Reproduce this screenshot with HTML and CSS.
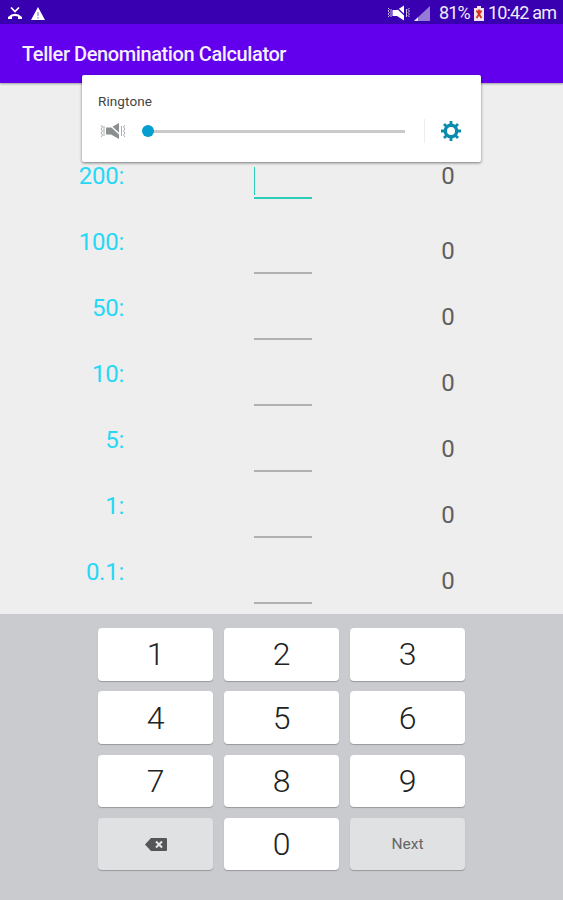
FILE: index.html
```html
<!DOCTYPE html>
<html lang="en">
<head>
    <meta charset="UTF-8">
    <meta name="viewport" content="width=device-width, initial-scale=1.0">
    <title>Teller Denomination Calculator</title>
    <link rel="stylesheet" href="styles.css">
</head>
<body>
    <div class="status-bar">
        <svg class="missed-call" width="14" height="13" viewBox="0 0 14 13">
            <path d="M3 0.500 L7 4.500 L11 0.500" fill="none" stroke="#fff" stroke-width="1.700"/>
            <path d="M0 10 Q7 3.500 14 10 V12 H10 V9.500 Q7 8.500 4 9.500 V12 H0 Z" fill="#fff"/>
        </svg>
        <svg class="warning" width="14" height="13" viewBox="0 0 14 13">
            <path d="M7 0 L14 13 H0 Z" fill="#fff"/>
            <path d="M7 5 V9 M7 10 V11.500" stroke="#9c86d8" stroke-width="1.300"/>
        </svg>
        <div class="status-right">
            <svg class="mute" width="24" height="16" viewBox="0 0 24 16">
                <path d="M5.500 5 H10 L17 0.500 V15.500 L10 11 H5.500 Z" fill="#fff"/>
                <path d="M8 1 L18.500 11" stroke="#3a00b0" stroke-width="1.300"/>
                <path d="M1 3 L2.500 4.500 L1 6 L2.500 7.500 L1 9 L2.500 10.500 L1 12 M4 4 V12 M19.500 4 V12 M22.500 3 L21 4.500 L22.500 6 L21 7.500 L22.500 9 L21 10.500 L22.500 12" fill="none" stroke="#c8b8ec"/>
            </svg>
            <svg class="signal" width="16" height="15" viewBox="0 0 16 15">
                <path d="M16 0 V15 H0 Z" fill="#957bd6"/>
                <path d="M4 11.300 V15 H0 Z" fill="#e6dff7"/>
            </svg>
            <span class="percent">81%</span>
            <svg class="battery" width="10" height="15" viewBox="0 0 10 15">
                <path d="M3 0 H7 V2 H10 V15 H0 V2 H3 Z" fill="#f3e4ea"/>
                <path d="M2.500 4.500 L7.500 12 M7.500 4.500 L2.500 12 M5 3.500 V8" stroke="#d8321c" stroke-width="1.800"/>
            </svg>
            <span class="clock">10:42 am</span>
        </div>
    </div>
    <header>
        <h1>Teller Denomination Calculator</h1>
    </header>

    <div class="volume-panel">
        <p>Ringtone</p>
        <div class="volume-row">
            <svg width="26" height="18" viewBox="0 0 26 18">
                <path d="M6 5.500 H11 L19 1 V17 L11 12.500 H6 Z" fill="#8c8f90"/>
                <path d="M7.500 1 L20 12.500" stroke="#fff" stroke-width="1.500"/>
                <path d="M1 3 L2.500 5 L1 7 L2.500 9 L1 11 L2.500 13 L1 15 M4 4 V14 M21.500 4 V14 M25 3 L23.500 5 L25 7 L23.500 9 L25 11 L23.500 13 L25 15" fill="none" stroke="#a9abac"/>
            </svg>
            <div class="slider"><div class="thumb"></div></div>
            <div class="divider"></div>
            <svg class="gear" width="20" height="20" viewBox="-10 -10 20 20">
                <circle r="5.700" fill="none" stroke="#0b8bad" stroke-width="3.400"/>
                <path d="M0 -10 V-6 M0 10 V6 M-10 0 H-6 M10 0 H6 M-7 -7 L-4.500 -4.500 M7 7 L4.500 4.500 M-7 7 L-4.500 4.500 M7 -7 L4.500 -4.500" stroke="#0b8bad" stroke-width="2.800"/>
            </svg>
        </div>
    </div>

    <main>
        <div class="labels">
            <span>200:</span>
            <span>100:</span>
            <span>50:</span>
            <span>10:</span>
            <span>5:</span>
            <span>1:</span>
            <span>0.1:</span>
        </div>
        <div class="inputs">
            <div class="field active"></div>
            <div class="field"></div>
            <div class="field"></div>
            <div class="field"></div>
            <div class="field"></div>
            <div class="field"></div>
            <div class="field"></div>
        </div>
        <div class="totals">
            <span>0</span>
            <span>0</span>
            <span>0</span>
            <span>0</span>
            <span>0</span>
            <span>0</span>
            <span>0</span>
        </div>
    </main>

    <div class="keyboard">
        <div class="key">1</div>
        <div class="key">2</div>
        <div class="key">3</div>
        <div class="key">4</div>
        <div class="key">5</div>
        <div class="key">6</div>
        <div class="key">7</div>
        <div class="key">8</div>
        <div class="key">9</div>
        <div class="key action">
            <svg width="22" height="13" viewBox="0 0 22 13">
                <path d="M6 0 H21 Q22 0 22 1 V12 Q22 13 21 13 H6 L0 6.500 Z" fill="#555658"/>
                <path d="M11 3.500 L17 9.500 M17 3.500 L11 9.500" stroke="#e6e7e8" stroke-width="2"/>
            </svg>
        </div>
        <div class="key">0</div>
        <div class="key action">Next</div>
    </div>
</body>
</html>
```
FILE: styles.css
```css
* {
    box-sizing: border-box;
}

body {
    font-family: Roboto, sans-serif;
    margin: 0;
    height: 900px;
    display: flex;
    flex-direction: column;
    overflow: hidden;
    background-color: #eeeeee;
    color: #606060;
}

.status-bar {
    height: 24px;
    flex: none;
    display: flex;
    align-items: center;
    padding: 2px 8px 0 8px;
    background-color: #3900b1; /* Dark purple */
    color: #f0ebfb;
}

.warning {
    margin-left: 9px;
}

.status-right {
    display: flex;
    align-items: center;
    margin-left: auto;
    font-size: 18px;
    line-height: 22px;
    white-space: nowrap;
}

.signal {
    margin-left: 3px;
}

.percent {
    width: 32px;
    margin-left: 9px;
    letter-spacing: -0.9px;
}

.battery {
    margin-left: 3px;
}

.clock {
    width: 67px;
    margin-left: 4px;
    letter-spacing: -0.85px;
}

header {
    height: 59px;
    flex: none;
    display: flex;
    align-items: center;
    padding: 1px 22px 0;
    background-color: #6200ee; /* Purple */
    box-shadow: 0 1px 2px rgba(0, 0, 0, 0.35);
}

header h1 {
    margin: 0;
    font-size: 20px;
    font-weight: 500;
    letter-spacing: -0.4px;
    color: #f5effe;
}

/* Floats over the header and the first row */
.volume-panel {
    position: absolute;
    top: 75px;
    left: 82px;
    width: 399px;
    height: 87px;
    padding: 18px 20px 0 16px;
    background-color: #fff;
    border-radius: 2px;
    box-shadow: 0 1px 3px rgba(0, 0, 0, 0.5);
}

.volume-panel p {
    margin: 0;
    font-size: 13.5px;
    line-height: 16px;
    letter-spacing: 0.1px;
    color: #444;
}

.volume-row {
    display: flex;
    align-items: center;
    height: 24px;
    margin-top: 10px;
    padding-left: 2px;
}

.slider {
    display: flex;
    align-items: center;
    width: 257px;
    height: 3px;
    margin-left: 22px;
    background-color: #c9c9c9;
}

.thumb {
    width: 12px;
    height: 12px;
    flex: none;
    margin-left: -6px;
    border-radius: 50%;
    background-color: #049fd0;
}

.divider {
    width: 1px;
    height: 24px;
    margin-left: 19px;
    background-color: #eeeeee;
}

.gear {
    margin-left: 16px;
}

main {
    height: 531px;
    flex: none;
    display: flex;
    font-size: 24px;
    line-height: 28px;
}

.labels, .inputs, .totals {
    display: flex;
    flex-direction: column;
}

.labels {
    width: 124px;
    gap: 38px;
    padding-top: 79px;
    text-align: right;
    letter-spacing: -0.25px;
    color: #26d8f5; /* Cyan */
}

.inputs {
    width: 58px;
    gap: 34px;
    margin-left: 130px;
    padding-top: 84px;
}

.field {
    height: 32px;
    border-bottom: 2px solid #b0b0b0;
}

.field.active {
    margin-bottom: 9px;
    border-bottom-color: #2ccdb9; /* Teal */
    background: linear-gradient(#2ccdb9, #2ccdb9) 0 0 / 1px 28px no-repeat;
}

.totals {
    width: 20px;
    gap: 38px;
    margin-left: 126px;
    padding-top: 79px;
    text-align: center;
}

.totals span:first-child {
    margin-bottom: 9px;
}

.keyboard {
    flex: 1;
    display: grid;
    grid-template-columns: repeat(3, 115px);
    grid-auto-rows: 52.5px;
    gap: 10.8px 11px;
    padding: 14px 98px 0;
    background-color: #c9cbcf;
}

.key {
    display: flex;
    align-items: center;
    justify-content: center;
    background-color: #fff;
    border-radius: 4px;
    box-shadow: 0 1px 1px rgba(0, 0, 0, 0.25);
    font-size: 32px;
    font-weight: 300;
    color: #222;
}

.key.action {
    background-color: #dfe1e3;
    font-size: 15.5px;
    font-weight: 400;
    color: #666;
}
```
